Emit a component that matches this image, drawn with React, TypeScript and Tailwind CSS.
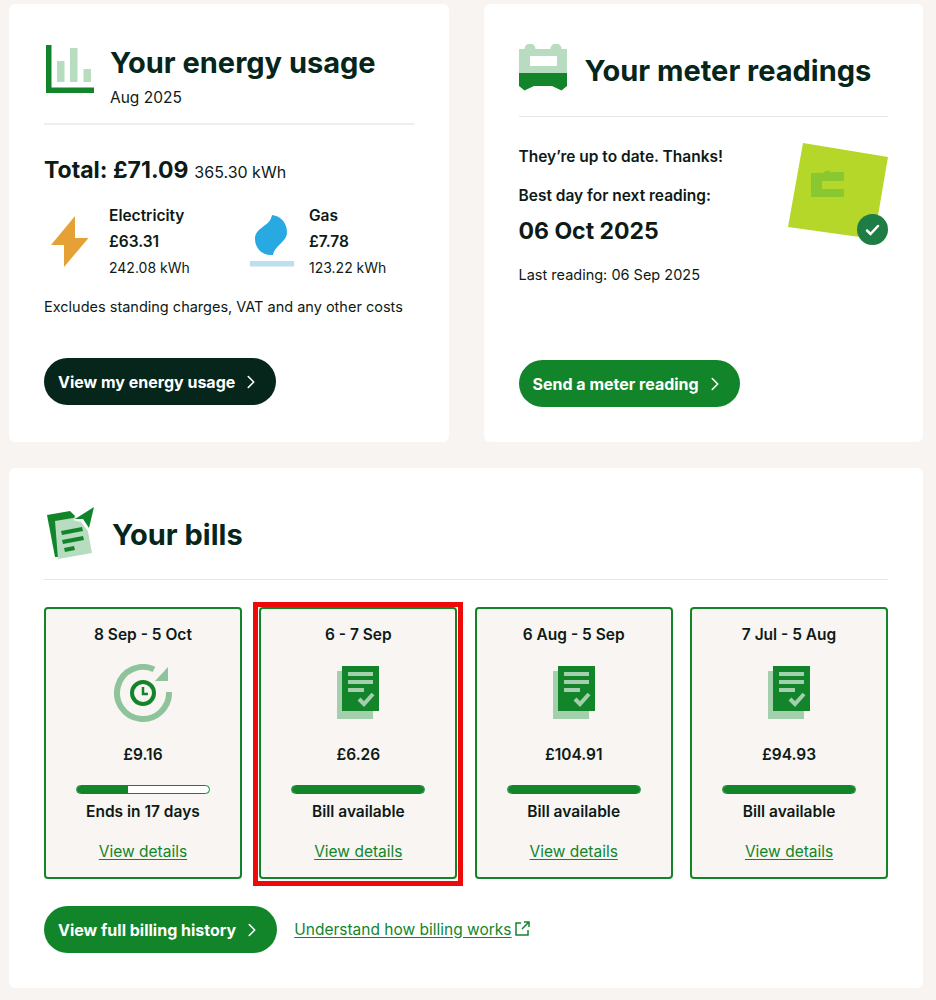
import { ChevronRight } from "lucide-react";

const font = "font-['Inter','Noto_Sans',sans-serif]";

function UsageIcon() {
  return (
    <svg width="48" height="48" viewBox="0 0 48 48" className="mt-[1px] shrink-0">
      <path fill="#b8dcc0" d="M11 16h7.500v21H11zM24 3h7.500v34H24zM37.500 24H45v13h-7.500z" />
      <path fill="#12852a" d="M0 0h5.500v42.500H48V48H0z" />
    </svg>
  );
}

function MeterIcon() {
  return (
    <svg width="48" height="48" viewBox="0 0 48 48" className="shrink-0">
      <path
        fill="#b8dcc0"
        d="M0 5h5.500a5.500 5.500 0 0 1 11 0h15a5.500 5.500 0 0 1 11 0H48v25H0z"
      />
      <path fill="#fff" d="M11 12h27v10H11z" />
      <path fill="#12852a" d="M0 29h48v13l-5.500 4.500L33 42H15L5.500 46.500 0 42z" />
    </svg>
  );
}

function BoltIcon() {
  return (
    <svg width="38" height="52" viewBox="0 0 38 52" className="shrink-0">
      <path fill="#e5a036" d="M24 0v22h13.500L13 51V29H0z" />
    </svg>
  );
}

function GasIcon() {
  return (
    <svg width="44" height="54" viewBox="0 0 44 54" className="shrink-0">
      <path
        fill="#29a9e1"
        d="M22 0C31 1 37 8 37 17 37 27 25 30 23 40 12 41 5 33 5 24 5 12 20 12 22 0z"
      />
      <path fill="#bde0f1" d="M0 46h44v5.500H0z" />
    </svg>
  );
}

function BillsIcon() {
  return (
    <svg width="48" height="52" viewBox="0 0 48 52" className="shrink-0">
      <path fill="#12852a" d="M0 8l23-4 5 5L12 50l-4 0z" />
      <path fill="#b8dcc0" d="M8 14l30-5 7 37-34 6z" />
      <path fill="#12852a" d="M14 24l21-4 1 4-21 4zM15 33l21-4 1 4-21 4zM17 41l10-2 1 4-10 2z" />
      <path fill="#fff" d="M26 13l21-13-6 24-7-9z" />
      <path fill="#12852a" d="M28 12 47 0l-5 21-6-9z" />
    </svg>
  );
}

function ClockIcon() {
  return (
    <svg width="58" height="58" viewBox="0 0 58 58">
      <path fill="none" stroke="#8fc39b" strokeWidth="6" d="M55 28A26 26 0 1 1 40 5.400" />
      <path fill="#8fc39b" d="M41 17H54V3z" />
      <circle cx="29" cy="29" r="11" fill="none" stroke="#12852a" strokeWidth="4" />
      <path fill="none" stroke="#12852a" strokeWidth="2.500" d="M29 23v7h5" />
    </svg>
  );
}

function BillDocIcon() {
  return (
    <svg width="42" height="54" viewBox="0 0 42 54">
      <path fill="#a3cfad" d="M0 5h36v48H0z" />
      <path fill="#12852a" d="M5 0h37v45H5z" />
      <path fill="#a3cfad" d="M11 6h25v4H11zM11 14h25v4H11zM11 22h16v4H11z" />
      <path fill="none" stroke="#a3cfad" strokeWidth="4" d="M22 33l5 5 9-10" />
    </svg>
  );
}

const bills = [
  { range: "8 Sep - 5 Oct", amount: "£9.16", status: "Ends in 17 days", pct: 39 },
  { range: "6 - 7 Sep", amount: "£6.26", status: "Bill available", pct: 100 },
  { range: "6 Aug - 5 Sep", amount: "£104.91", status: "Bill available", pct: 100 },
  { range: "7 Jul - 5 Aug", amount: "£94.93", status: "Bill available", pct: 100 },
];

function BillCard({ bill, index }: { bill: (typeof bills)[number]; index: number }) {
  return (
    <div className="relative h-[272px] rounded-[4px] border-2 border-[#12852a] bg-[#f8f5f2] pt-[15px] text-center">
      <p className="text-[15.500px] leading-[22px] font-semibold text-[#0e1a16]">{bill.range}</p>
      <div className="mt-[18px] flex h-[58px] items-center justify-center">
        {index === 0 ? <ClockIcon /> : <BillDocIcon />}
      </div>
      <p className="mt-[22px] text-[15.500px] leading-[22px] font-semibold text-[#0e1a16]">{bill.amount}</p>
      <div className="mx-auto mt-[19px] h-[9px] w-[134px] overflow-hidden rounded-full border border-[#12852a] bg-white">
        <div className="h-full bg-[#12852a]" style={{ width: `${bill.pct}%` }} />
      </div>
      <p className="mt-[7px] text-[15.500px] leading-[22px] font-semibold text-[#0e1a16]">{bill.status}</p>
      <a className="mt-[18px] inline-block text-[15.500px] leading-[21px] text-[#12852a] underline underline-offset-2">
        View details
      </a>
      {index === 1 && (
        <div className="absolute top-[-7px] right-[-8px] bottom-[-9px] left-[-8px] border-[5px] border-[#ee0a0a]" />
      )}
    </div>
  );
}

export default function App() {
  return (
    <div className={`h-[1000px] overflow-hidden bg-[#f8f4f1] pt-[4px] pr-[13px] pl-[9px] text-[#0e1a16] ${font}`}>
      <div className="grid grid-cols-2 gap-[35px]">
        <section className="h-[438px] rounded-[6px] bg-white pt-[40px] pr-[35px] pl-[35px]">
          <div className="flex h-[81px] gap-[16px] border-b-2 border-[#eeeeec] pl-[2px]">
            <UsageIcon />
            <div>
              <h2 className="text-[29px] leading-[38px] font-bold text-[#06251b]">Your energy usage</h2>
              <p className="mt-[5px] text-[15.500px] leading-[22px]">Aug 2025</p>
            </div>
          </div>
          <p className="mt-[28px] flex items-baseline gap-[6px] leading-[34px]">
            <span className="text-[23px] font-bold">Total: £71.09</span>
            <span className="text-[16px]">365.30 kWh</span>
          </p>
          <div className="mt-[14px] flex">
            <div className="flex w-[200px] items-center">
              <div className="flex w-[65px] justify-center pr-[14px]">
                <BoltIcon />
              </div>
              <div className="text-[15.500px] leading-[26px]">
                <p className="font-semibold">Electricity</p>
                <p className="font-semibold">£63.31</p>
                <p className="text-[14px]">242.08 kWh</p>
              </div>
            </div>
            <div className="flex items-center">
              <div className="mr-[15px] ml-[6px]">
                <GasIcon />
              </div>
              <div className="text-[15.500px] leading-[26px]">
                <p className="font-semibold">Gas</p>
                <p className="font-semibold">£7.78</p>
                <p className="text-[14px]">123.22 kWh</p>
              </div>
            </div>
          </div>
          <p className="mt-[15px] text-[14.500px] leading-[22px]">Excludes standing charges, VAT and any other costs</p>
          <a className="mt-[40px] inline-flex h-[47px] items-center gap-[5px] rounded-full bg-[#06251b] pr-[14px] pl-[14px] text-[16px] font-bold text-white">
            View my energy usage
            <ChevronRight size={22} strokeWidth={1.75} />
          </a>
        </section>

        <section className="h-[438px] rounded-[6px] bg-white pt-[40px] pr-[35px] pl-[35px]">
          <div className="flex h-[73px] gap-[18px] border-b border-[#e6e6e4]">
            <MeterIcon />
            <h2 className="mt-[8px] text-[29px] leading-[38px] font-bold text-[#06251b]">Your meter readings</h2>
          </div>
          <div className="flex justify-between">
            <div>
              <p className="mt-[29px] text-[15.500px] leading-[22px] font-semibold">They’re up to date. Thanks!</p>
              <p className="mt-[17px] text-[15.500px] leading-[22px] font-semibold">Best day for next reading:</p>
              <p className="mt-[9px] text-[23px] leading-[30px] font-bold">06 Oct 2025</p>
              <p className="mt-[18px] text-[14.500px] leading-[22px]">Last reading: 06 Sep 2025</p>
            </div>
            <div className="relative mt-[26px] h-[102px] w-[100px]">
              <svg width="100" height="102" viewBox="0 0 100 102">
                <path fill="#b4d72a" d="M15 0 100 14 86 96 0 84z" />
                <path fill="#8ac832" d="M23 30h12a5.500 5.500 0 0 1 9 0V29h12v9H34v8h22v8H23z" />
              </svg>
              <div className="absolute right-0 bottom-0 flex h-[31px] w-[31px] items-center justify-center rounded-full bg-[#1e7d45]">
                <svg width="15" height="12" viewBox="0 0 15 12">
                  <path fill="none" stroke="#fff" strokeWidth="2.500" strokeLinecap="round" d="M2 6.500 5.500 10 13 2" />
                </svg>
              </div>
            </div>
          </div>
          <a className="mt-[74px] inline-flex h-[47px] items-center gap-[5px] rounded-full bg-[#12852a] pr-[14px] pl-[14px] text-[16px] font-bold text-white">
            Send a meter reading
            <ChevronRight size={22} strokeWidth={1.75} />
          </a>
        </section>
      </div>

      <section className="mt-[26px] h-[520px] rounded-[6px] bg-white pt-[39px] pr-[35px] pl-[35px]">
        <div className="flex h-[73px] gap-[17px] border-b border-[#e6e6e4] pl-[3px]">
          <BillsIcon />
          <h2 className="mt-[9px] text-[29px] leading-[38px] font-bold text-[#06251b]">Your bills</h2>
        </div>
        <div className="mt-[27px] grid grid-cols-4 gap-[17.500px]">
          {bills.map((bill, i) => (
            <BillCard key={bill.range} bill={bill} index={i} />
          ))}
        </div>
        <div className="mt-[27px] flex items-center gap-[17px]">
          <a className="inline-flex h-[47px] items-center gap-[5px] rounded-full bg-[#12852a] pr-[14px] pl-[14px] text-[16px] font-bold text-white">
            View full billing history
            <ChevronRight size={22} strokeWidth={1.75} />
          </a>
          <span className="flex items-center gap-[3px] text-[#12852a]">
            <a className="text-[15.500px] underline underline-offset-2">Understand how billing works</a>
            <svg width="15" height="15" viewBox="0 0 15 15" className="mb-[3px]">
              <path fill="none" stroke="#12852a" strokeWidth="1.500" d="M6 2H1v12h12V9M7 8l7-7M9 1h5v5" />
            </svg>
          </span>
        </div>
      </section>
    </div>
  );
}
